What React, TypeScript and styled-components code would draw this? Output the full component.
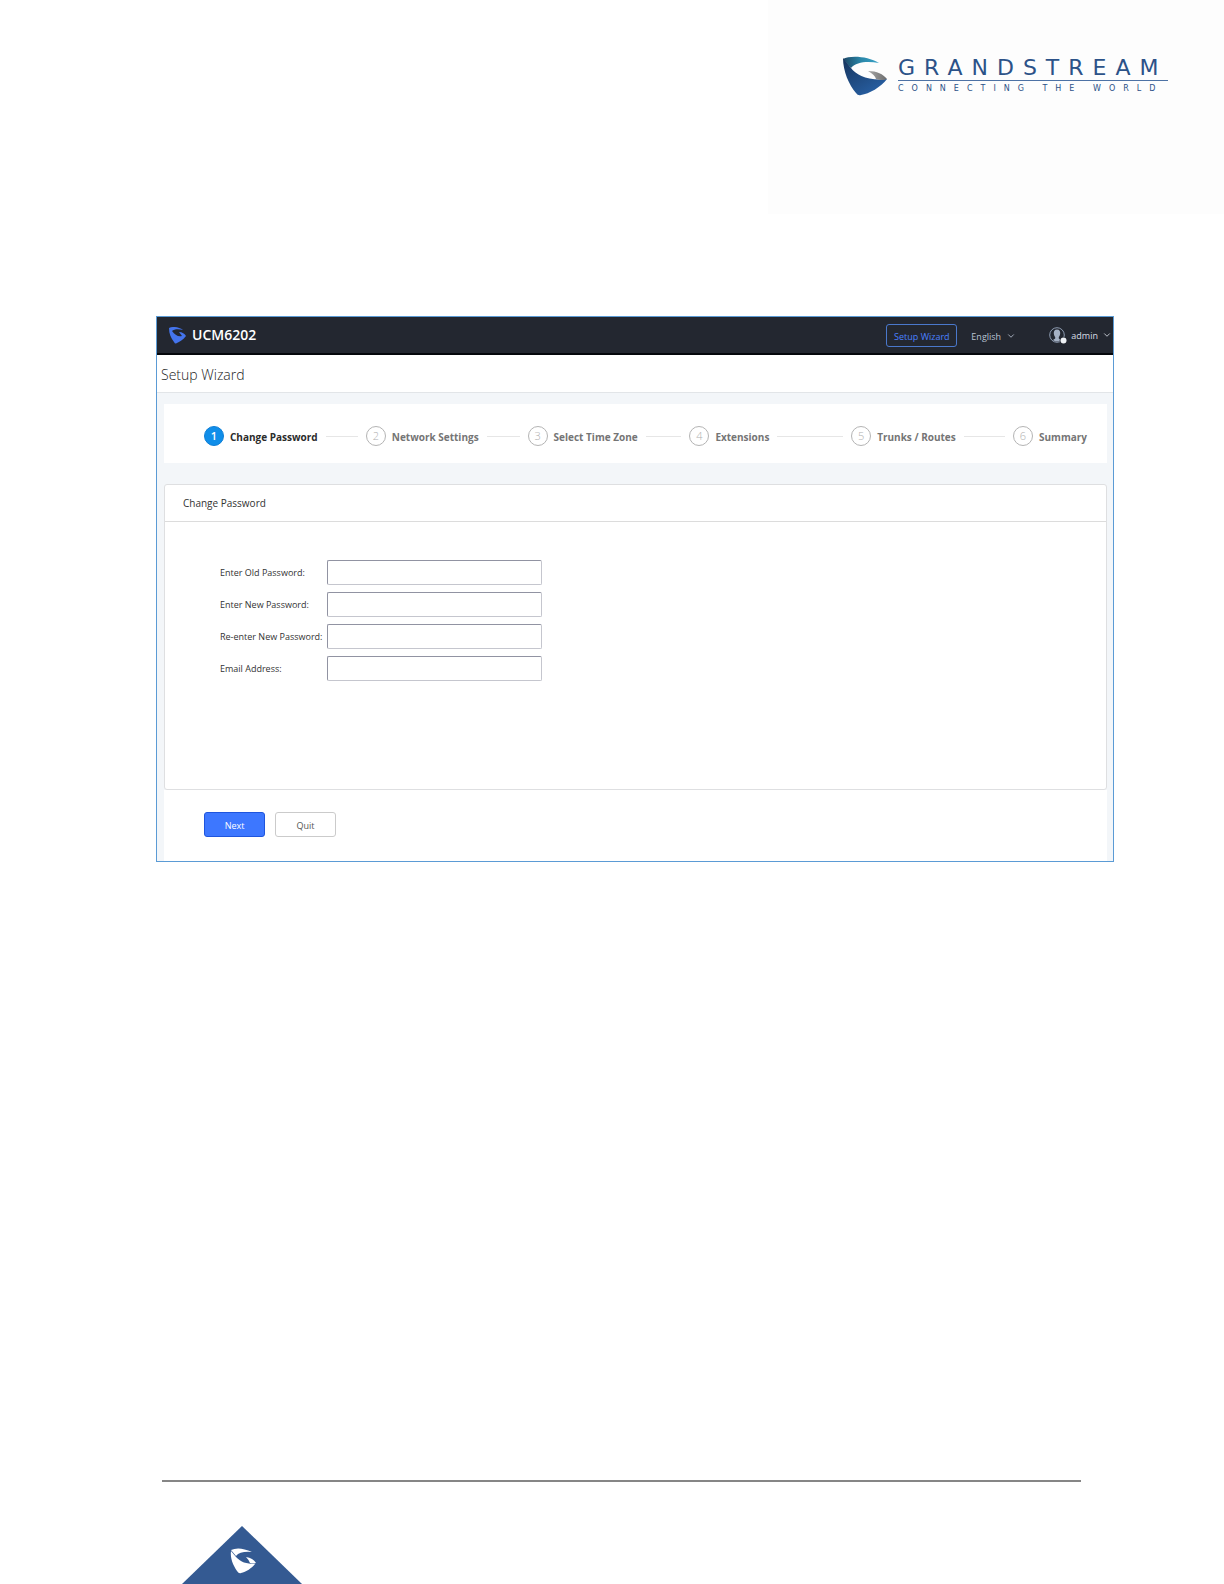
import React from "react";
import styled, { createGlobalStyle } from "styled-components";
import { ChevronDown } from "lucide-react";

const GlobalStyle = createGlobalStyle`
  *, *::before, *::after { box-sizing: border-box; }
  body {
    margin: 0;
    background: #fff;
    color: #333;
    font-family: "Open Sans", "Noto Sans", sans-serif;
    font-size: 9px;
  }
  button, input, select { font: inherit; }
`;

const Page = styled.div`
  display: flex;
  flex-direction: column;
  min-height: 100vh;
`;

const Letterhead = styled.header`
  display: flex;
  justify-content: flex-end;
  padding-bottom: 102px;
`;

const LogoPanel = styled.div`
  display: flex;
  justify-content: flex-end;
  align-items: flex-start;
  gap: 10px;
  width: 456px;
  height: 214px;
  padding: 56px 56px 0 0;
  background: #fdfdfd;
`;

const Brand = styled.div`
  display: flex;
  flex-direction: column;
  width: 270px;
  color: #2c5288;
  font-family: "DejaVu Sans", sans-serif;
  white-space: nowrap;
`;

const Wordmark = styled.div`
  height: 25px;
  border-bottom: 1px solid #4d72a5;
  font-size: 22px;
  line-height: 24px;
  letter-spacing: 9px;
`;

const Tagline = styled.div`
  font-size: 8px;
  line-height: 16px;
  letter-spacing: 8px;
`;

const Frame = styled.main`
  display: flex;
  flex-direction: column;
  margin: 0 110px 0 156px;
  border: 1px solid #5b9bd5;
  background: #f3f6f9;
`;

const TopBar = styled.div`
  display: flex;
  align-items: center;
  height: 38px;
  padding: 0 1px 0 12px;
  border-bottom: 2px solid #05070b;
  background: #232730;
`;

const Product = styled.div`
  flex: 1;
  display: flex;
  align-items: center;
  gap: 6px;
  color: #fff;
  font-size: 14px;
  font-weight: 600;
  line-height: 20px;
`;

const WizardButton = styled.button`
  width: 71px;
  height: 23px;
  padding: 2px 0 0;
  border: 1px solid #4a78cc;
  border-radius: 3px;
  background: transparent;
  color: #4a80ff;
  font-size: 9px;
`;

const Language = styled.label`
  display: flex;
  align-items: center;
  gap: 5px;
  margin: 0 33px 0 14px;
  padding-top: 2px;
  color: #b9c3d2;
`;

const LanguageSelect = styled.select`
  appearance: none;
  width: 30px;
  padding: 0;
  border: 0;
  background: transparent;
  color: inherit;
  font-size: 9px;
`;

const Account = styled.button`
  display: flex;
  align-items: center;
  gap: 4px;
  padding: 0;
  border: 0;
  background: transparent;
  color: #d8dde6;
  font-size: 9px;
`;

const PageTitle = styled.h1`
  height: 38px;
  margin: 0;
  padding: 0 4px;
  border-bottom: 1px solid #e2e5e8;
  background: #fff;
  color: #222;
  font-size: 14px;
  font-weight: 300;
  line-height: 40px;
`;

const Body = styled.div`
  display: flex;
  flex-direction: column;
  padding: 11px 6px 0 7px;
`;

const Steps = styled.ol`
  display: flex;
  align-items: center;
  height: 59px;
  margin: 0 0 21px;
  padding: 5px 19px 0 40px;
  background: #fff;
  list-style: none;
`;

const StepItem = styled.li<{ $last: boolean }>`
  flex: ${(p) => (p.$last ? "0 0 75px" : "1 1 0")};
  display: flex;
  align-items: center;
  gap: 6px;
`;

const StepNumber = styled.span<{ $active: boolean }>`
  flex: none;
  width: 20px;
  height: 20px;
  border: 1px solid ${(p) => (p.$active ? "#0f7fd6" : "#b4b4b4")};
  border-radius: 50%;
  background: ${(p) => (p.$active ? "#108ee9" : "#fff")};
  color: ${(p) => (p.$active ? "#fff" : "#b0b0b0")};
  font-size: 11px;
  font-weight: ${(p) => (p.$active ? 600 : 300)};
  line-height: 18px;
  text-align: center;
`;

const StepLabel = styled.span<{ $active: boolean }>`
  flex: none;
  padding-top: 2px;
  color: ${(p) => (p.$active ? "#2b2b2b" : "#757575")};
  font-size: 10px;
  font-weight: 700;
  line-height: 18px;
`;

const StepLine = styled.span`
  flex: 1;
  height: 1px;
  margin: 0 8px 0 2px;
  background: #e6e6e6;
`;

const Card = styled.section`
  border: 1px solid #dedfe1;
  border-radius: 3px;
  background: #fff;
`;

const CardTitle = styled.h2`
  height: 37px;
  margin: 0;
  padding: 0 18px;
  border-bottom: 1px solid #dcdcdc;
  font-size: 10px;
  font-weight: 400;
  line-height: 36px;
`;

const Fields = styled.div`
  display: flex;
  flex-direction: column;
  gap: 7px;
  padding: 38px 0 108px 55px;
`;

const Field = styled.div`
  display: grid;
  grid-template-columns: 107px 215px;
  align-items: center;
`;

const FieldLabel = styled.label`
  font-size: 9px;
  line-height: 24px;
  white-space: nowrap;
`;

const FieldInput = styled.input`
  width: 100%;
  height: 25px;
  padding: 0 8px;
  border: 1px solid #c5c6ce;
  border-top-color: #9193a2;
  border-left-color: #9193a2;
  border-radius: 2px;
  background: #fff;
`;

const Actions = styled.div`
  display: flex;
  gap: 10px;
  padding: 22px 40px 24px;
  background: #fff;
`;

const ActionButton = styled.button<{ $primary?: boolean }>`
  width: 61px;
  height: 25px;
  padding: 1px 0 0;
  border: 1px solid ${(p) => (p.$primary ? "#1f55dd" : "#cbcbcb")};
  border-radius: 3px;
  background: ${(p) => (p.$primary ? "#3d77ff" : "#fff")};
  color: ${(p) => (p.$primary ? "#fff" : "#555")};
  font-size: 9px;
`;

const Footer = styled.footer`
  display: flex;
  flex-direction: column;
  gap: 44px;
  margin: auto 143px 0 162px;
`;

const FooterRule = styled.hr`
  width: 100%;
  height: 2px;
  margin: 0;
  border: 0;
  background: #868686;
`;

const CornerMark = styled.svg`
  display: block;
  margin-left: 20px;
`;

const HeaderLogo = () => (
  <svg width="45" height="40" viewBox="0 0 45 40" aria-hidden="true">
    <defs>
      <linearGradient id="teal" x1="0" x2="1">
        <stop offset="0" stopColor="#1d4664" />
        <stop offset="0.5" stopColor="#2a86a8" />
        <stop offset="1" stopColor="#39a3c8" />
      </linearGradient>
      <linearGradient id="navy" x1="0" y1="0" x2="0.7" y2="1">
        <stop offset="0" stopColor="#16345c" />
        <stop offset="1" stopColor="#2860a4" />
      </linearGradient>
      <linearGradient id="silver" x1="0" x2="1">
        <stop offset="0" stopColor="#a8a8a8" />
        <stop offset="1" stopColor="#6c6c6c" />
      </linearGradient>
    </defs>
    <path d="M0 3C7-1 25 0 36 7C24 5 13 6 8 12L0 3Z" fill="url(#teal)" />
    <path d="M0 2L8 12C13 19 25 25 44 23C38 31 26 38 18 39Q15 40 13 37C6 29 0 15 0 2Z" fill="url(#navy)" />
    <path d="M25 15C34 15 40 18 44 23Q39 25 33 23Q32 19 25 15Z" fill="url(#silver)" />
  </svg>
);

const ProductLogo = () => (
  <svg width="17" height="17" viewBox="0 0 17 17" aria-hidden="true">
    <path d="M0 1C4-1 10 0 14 3C10 2 5 2 3 4C6 8 9 10 13 9L10 5C13 5 16 7 17 9C14 13 10 15 7 16.5Q6 17 5 15C2 11 0 7 0 1Z" fill="#4474ec" />
  </svg>
);

const Avatar = () => (
  <svg width="18" height="17" viewBox="0 0 18 17" aria-hidden="true">
    <circle cx="8" cy="8" r="7.3" fill="none" stroke="#8d9bb0" />
    <path d="M8 2.5C10.5 2.5 11.4 4.4 11.2 6.5C11 8.3 10.3 9.4 9.8 10V11.5L12 13Q8 16 4 13L6.2 11.5V10C5.6 9.4 5 8.3 4.8 6.5C4.6 4.4 5.5 2.5 8 2.5Z" fill="#a5b1c4" />
    <circle cx="14.5" cy="13.5" r="3.8" fill="#232730" />
    <circle cx="14.5" cy="13.5" r="3" fill="#eef1f5" />
  </svg>
);

const steps = [
  "Change Password",
  "Network Settings",
  "Select Time Zone",
  "Extensions",
  "Trunks / Routes",
  "Summary",
];

const fields = [
  { id: "old-password", label: "Enter Old Password:", type: "password" },
  { id: "new-password", label: "Enter New Password:", type: "password" },
  { id: "repeat-password", label: "Re-enter New Password:", type: "password" },
  { id: "email", label: "Email Address:", type: "email" },
];

export default function App() {
  return (
    <Page>
      <GlobalStyle />
      <Letterhead>
        <LogoPanel>
          <HeaderLogo />
          <Brand>
            <Wordmark>GRANDSTREAM</Wordmark>
            <Tagline>CONNECTING THE WORLD</Tagline>
          </Brand>
        </LogoPanel>
      </Letterhead>

      <Frame>
        <TopBar>
          <Product>
            <ProductLogo />
            UCM6202
          </Product>
          <WizardButton type="button">Setup Wizard</WizardButton>
          <Language>
            <LanguageSelect aria-label="Language">
              <option>English</option>
            </LanguageSelect>
            <ChevronDown size={10} />
          </Language>
          <Account type="button">
            <Avatar />
            admin
            <ChevronDown size={10} />
          </Account>
        </TopBar>
        <PageTitle>Setup Wizard</PageTitle>
        <Body>
          <Steps>
            {steps.map((name, i) => (
              <StepItem key={name} $last={i === steps.length - 1}>
                <StepNumber $active={i === 0}>{i + 1}</StepNumber>
                <StepLabel $active={i === 0}>{name}</StepLabel>
                {i < steps.length - 1 && <StepLine />}
              </StepItem>
            ))}
          </Steps>
          <Card>
            <CardTitle>Change Password</CardTitle>
            <Fields>
              {fields.map((f) => (
                <Field key={f.id}>
                  <FieldLabel htmlFor={f.id}>{f.label}</FieldLabel>
                  <FieldInput id={f.id} type={f.type} />
                </Field>
              ))}
            </Fields>
          </Card>
          <Actions>
            <ActionButton type="button" $primary>
              Next
            </ActionButton>
            <ActionButton type="button">Quit</ActionButton>
          </Actions>
        </Body>
      </Frame>

      <Footer>
        <FooterRule />
        <CornerMark width="120" height="58" viewBox="0 0 120 58" aria-hidden="true">
          <path d="M60 0L120 58H0Z" fill="#345a92" />
          <path d="M49 24Q57 20 70 26Q58 25 54 30L49 24Z" fill="#fff" />
          <path d="M49 25L54 31C59 36 64 38 73 38C70 42 64 46 59 47Q57 48 55 45C51 39 48 32 49 25Z" fill="#fff" />
          <path d="M64 31Q71 32 74 37Q71 38 68 37Q67 34 64 31Z" fill="#fff" />
        </CornerMark>
      </Footer>
    </Page>
  );
}
